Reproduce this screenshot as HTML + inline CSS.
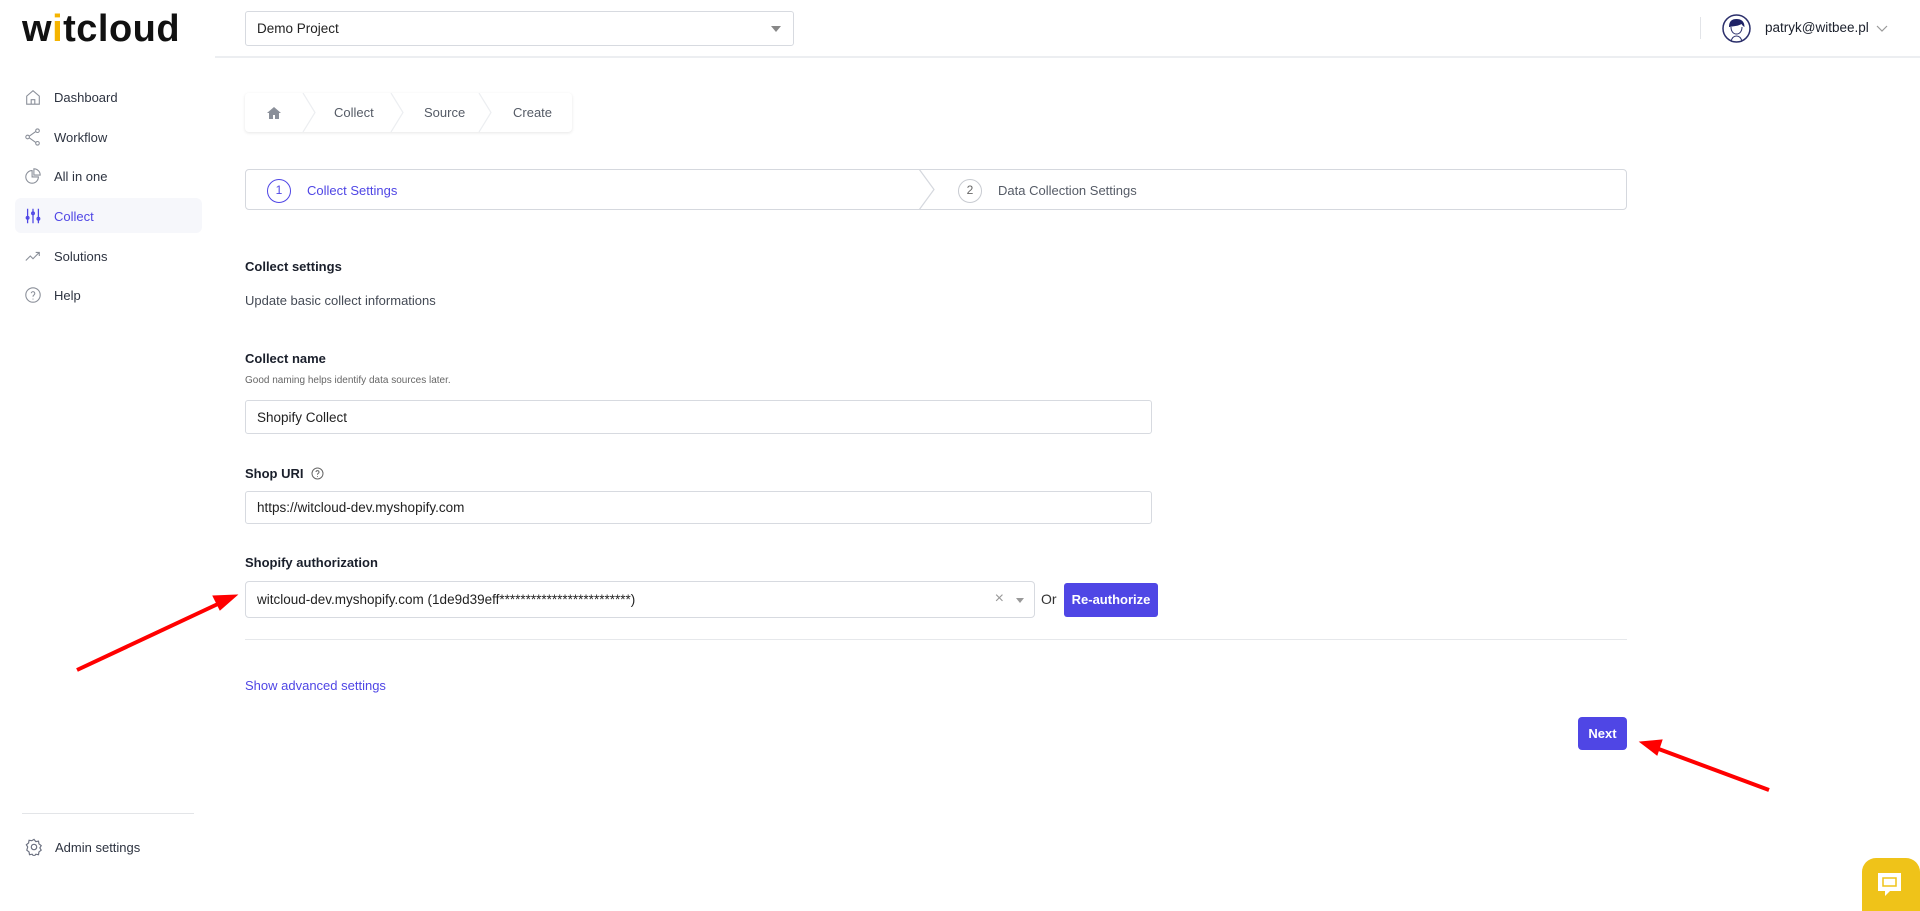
<!DOCTYPE html>
<html><head><meta charset="utf-8"><style>
*{box-sizing:border-box;margin:0;padding:0}
body{width:1920px;height:911px;background:#fff;font-family:"Liberation Sans",sans-serif;color:#1f2433;position:relative;overflow:hidden;font-size:14px}
.a{position:absolute}
.logo{left:22px;top:8px;font-size:38px;font-weight:bold;letter-spacing:0.5px;color:#111}
.nav{left:24px;font-size:13px;color:#2d3340;display:flex;align-items:center}
.nav svg{width:18px;height:18px;margin-right:12px}
.inp{border:1px solid #d7dae0;border-radius:3px;background:#fff;display:flex;align-items:center;padding-left:11px;font-size:13.5px;color:#222}
.lbl{font-size:13px;font-weight:bold;color:#1a1f2b}
</style></head><body>
<div class="a logo">w<span style="color:#f5b400">i</span>tcloud</div>
<div class="a" style="left:215px;top:56px;width:1705px;height:2px;background:#eceef1"></div>
<div class="a inp" style="left:245px;top:11px;width:549px;height:35px;font-size:13.5px;">Demo Project<span class="a" style="right:12px;top:14px;border-left:5px solid transparent;border-right:5px solid transparent;border-top:6px solid #888"></span></div>
<div class="a" style="left:1700px;top:17px;width:1px;height:22px;background:#e2e4e8"></div>
<svg class="a" style="left:1722px;top:14px" width="29" height="29" viewBox="0 0 29 29"><circle cx="14.5" cy="14.5" r="13.5" fill="#fff" stroke="#2b2f6b" stroke-width="1.5"/><path d="M7 13c0-6 3-8 7.5-8s8 2 8 8c-2-1-3-3-3-3-3 2-7 2-12 3z" fill="#1e2266"/><path d="M9 13c0 4 2 7 5.5 7s5.5-3 5.5-7" fill="none" stroke="#2b2f6b" stroke-width="1"/><path d="M9 27c1-3 3-5 5.5-5s4.5 2 5.5 5" fill="none" stroke="#2b2f6b" stroke-width="1"/></svg>
<div class="a" style="left:1765px;top:20px;font-size:13.5px;color:#1a1f2b">patryk@witbee.pl</div>
<svg class="a" style="left:1876px;top:25px" width="12" height="8"><path d="M1 1l5 5 5-5" fill="none" stroke="#999" stroke-width="1.2"/></svg>

<div class="a" style="left:15px;top:198px;width:187px;height:35px;background:#f6f7fb;border-radius:6px"></div>
<div class="a nav" style="top:88px"><svg viewBox="0 0 20 20" fill="none" stroke="#8a8f99" stroke-width="1.2"><path d="M3 9l7-6 7 6v9H3z"/><path d="M8 18v-5h4v5"/></svg>Dashboard</div>
<div class="a nav" style="top:128px"><svg viewBox="0 0 20 20" fill="none" stroke="#8a8f99" stroke-width="1.2"><circle cx="4" cy="10" r="2"/><circle cx="15" cy="3" r="2"/><circle cx="15" cy="17" r="2"/><path d="M6 9l7-5M6 11l7 5"/></svg>Workflow</div>
<div class="a nav" style="top:167px"><svg viewBox="0 0 20 20" fill="none" stroke="#8a8f99" stroke-width="1.2"><path d="M9 4a7 7 0 1 0 7 7H9z"/><path d="M11 2a7 7 0 0 1 7 7h-7z"/></svg>All in one</div>
<div class="a nav" style="top:207px;color:#4f46e5"><svg viewBox="0 0 20 20" fill="none" stroke="#4f46e5" stroke-width="1.4"><path d="M4 2v16M10 2v16M16 2v16"/><circle cx="4" cy="12" r="1.5"/><circle cx="10" cy="7" r="1.5"/><circle cx="16" cy="13" r="1.5"/></svg>Collect</div>
<div class="a nav" style="top:247px"><svg viewBox="0 0 20 20" fill="none" stroke="#8a8f99" stroke-width="1.2"><path d="M2 15l5-5 3 3 7-7M13 6h4v4"/></svg>Solutions</div>
<div class="a nav" style="top:286px"><svg viewBox="0 0 20 20" fill="none" stroke="#8a8f99" stroke-width="1.2"><circle cx="10" cy="10" r="8"/><path d="M8 8a2 2 0 1 1 3 2c-1 .5-1 1-1 2M10 14v1"/></svg>Help</div>
<div class="a" style="left:22px;top:813px;width:172px;height:1px;background:#e3e5e8"></div>
<div class="a nav" style="top:838px;left:25px"><svg viewBox="0 0 20 20" fill="none" stroke="#6b7080" stroke-width="1.3"><circle cx="10" cy="10" r="3"/><path d="M10 1.5l2 2.5 3-.5.5 3 2.5 2-1.5 2.5 1.5 2.5-2.5 2-.5 3-3-.5-2 2.5-2-2.5-3 .5-.5-3-2.5-2L3 10 1.5 7.5 4 5.5l.5-3 3 .5z"/></svg>Admin settings</div>

<div class="a" style="left:245px;top:93px;width:327px;height:39px;background:#fff;border-radius:4px;box-shadow:0 1px 3px rgba(0,0,0,.1)"></div>
<svg class="a" style="left:245px;top:93px" width="327" height="39"><path d="M58 0l12 19.5L58 39M146 0l12 19.5L146 39M234 0l12 19.5L234 39" fill="none" stroke="#eceef1" stroke-width="1.2"/><path d="M29 14l-7 6h2v6h4v-4h2v4h4v-6h2z" fill="#8a8f99"/></svg>
<div class="a" style="left:334px;top:105px;font-size:13px;color:#555b66">Collect</div>
<div class="a" style="left:424px;top:105px;font-size:13px;color:#555b66">Source</div>
<div class="a" style="left:513px;top:105px;font-size:13px;color:#555b66">Create</div>

<div class="a" style="left:245px;top:169px;width:1382px;height:41px;border:1px solid #d5d8de;border-radius:4px"></div>
<svg class="a" style="left:918px;top:169px" width="18" height="41"><path d="M1 0l15 20.5L1 41" fill="none" stroke="#d5d8de" stroke-width="1.2"/></svg>
<div class="a" style="left:267px;top:179px;width:24px;height:24px;border:1.5px solid #4f46e5;border-radius:50%;color:#4f46e5;font-size:12px;text-align:center;line-height:21px">1</div>
<div class="a" style="left:307px;top:183px;color:#4f46e5;font-size:13px">Collect Settings</div>
<div class="a" style="left:958px;top:179px;width:24px;height:24px;border:1.5px solid #c8cbd1;border-radius:50%;color:#666;font-size:12px;text-align:center;line-height:21px">2</div>
<div class="a" style="left:998px;top:183px;color:#555b66;font-size:13px">Data Collection Settings</div>

<div class="a lbl" style="left:245px;top:259px">Collect settings</div>
<div class="a" style="left:245px;top:293px;font-size:13px;color:#444a55">Update basic collect informations</div>
<div class="a lbl" style="left:245px;top:351px">Collect name</div>
<div class="a" style="left:245px;top:375px;font-size:10px;color:#666">Good naming helps identify data sources later.</div>
<div class="a inp" style="left:245px;top:400px;width:907px;height:34px">Shopify Collect</div>
<div class="a lbl" style="left:245px;top:466px">Shop URI <svg style="vertical-align:-2px;margin-left:4px" width="13" height="13" viewBox="0 0 13 13" fill="none" stroke="#666" stroke-width="1"><circle cx="6.5" cy="6.5" r="5.5"/><path d="M5 5a1.5 1.5 0 1 1 2 1.5c-.5.3-.5.6-.5 1.3M6.5 9.3v.7"/></svg></div>
<div class="a inp" style="left:245px;top:491px;width:907px;height:33px">https://witcloud-dev.myshopify.com</div>
<div class="a lbl" style="left:245px;top:555px">Shopify authorization</div>
<div class="a inp" style="left:245px;top:581px;width:790px;height:37px;border-radius:4px">witcloud-dev.myshopify.com (1de9d39eff*************************)<span class="a" style="right:30px;top:8px;color:#999;font-size:16px">×</span><span class="a" style="right:10px;top:16px;border-left:4px solid transparent;border-right:4px solid transparent;border-top:5px solid #999"></span></div>
<div class="a" style="left:1041px;top:591px;font-size:14px;color:#333">Or</div>
<div class="a" style="left:1064px;top:583px;width:94px;height:34px;background:#4f46e5;border-radius:3px;color:#fff;font-weight:bold;font-size:13px;text-align:center;line-height:34px">Re-authorize</div>
<div class="a" style="left:245px;top:639px;width:1382px;height:1px;background:#e6e8eb"></div>
<div class="a" style="left:245px;top:678px;color:#4f46e5;font-size:13px">Show advanced settings</div>
<div class="a" style="left:1578px;top:717px;width:49px;height:33px;background:#4f46e5;border-radius:4px;color:#fff;font-weight:bold;font-size:13px;text-align:center;line-height:33px">Next</div>

<svg class="a" style="left:0;top:0" width="1920" height="911"><g stroke="#f00" stroke-width="4" fill="#f00"><line x1="77" y1="670" x2="220" y2="603"/><path d="M237 595l-24 1 7 14z" stroke-width="1"/><line x1="1769" y1="790" x2="1656" y2="748"/><path d="M1640 742l22-2-5 15z" stroke-width="1"/></g></svg>

<div class="a" style="left:1862px;top:858px;width:58px;height:53px;background:#efc319;border-radius:14px 14px 0 0"></div>
<svg class="a" style="left:1875px;top:870px" width="30" height="30" viewBox="0 0 30 30"><path d="M3 3h23v18H15l-5 5v-5H3z" fill="#fff"/><rect x="8" y="8" width="13" height="8" fill="none" stroke="#efc319" stroke-width="1.5"/></svg>
</body></html>
